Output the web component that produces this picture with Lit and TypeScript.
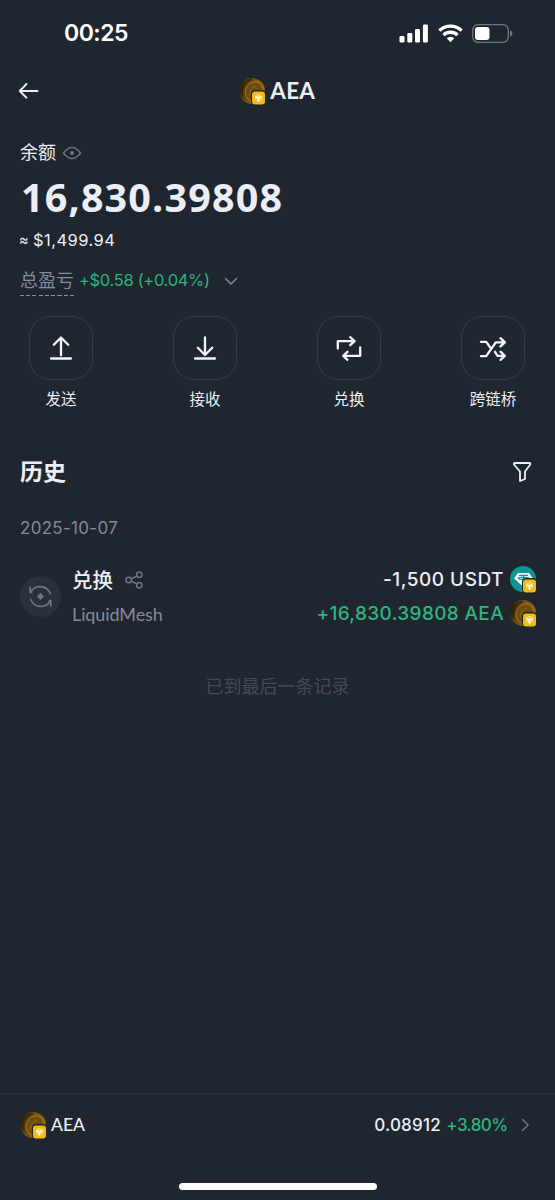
import { LitElement, html, svg, css } from "lit";
import { customElement, property } from "lit/decorators.js";

const goldCoin = svg`
  <defs>
    <linearGradient id="g" x1="0" y1="0.3" x2="1" y2="0.6">
      <stop offset="0" stop-color="#1c1508"></stop>
      <stop offset="0.25" stop-color="#5a400e"></stop>
      <stop offset="0.65" stop-color="#8a6010"></stop>
      <stop offset="1" stop-color="#9a6a12"></stop>
    </linearGradient>
  </defs>
  <circle cx="13" cy="13" r="13" fill="url(#g)"></circle>
  <path d="M3.500 18C1.500 10 5.500 3 13 1.200" fill="none" stroke="#33250b" stroke-width="1.600"></path>
  <ellipse cx="15" cy="13.500" rx="8.600" ry="9.800" transform="rotate(25 15 13.500)" fill="#6d4c10" stroke="#a8711a" stroke-width="1"></ellipse>
  <path d="M10.500 18C10.500 13 13 9 16.500 8.500" fill="none" stroke="#94671a" stroke-width="1"></path>
  <path d="M11.500 14.500l5.500-2-3.500 3.500z" fill="#77736a"></path>`;

const tether = svg`
  <circle cx="13" cy="13" r="13" fill="#0f9690"></circle>
  <path d="M8 7h11l4 5.500L13.500 21 4 12.500z" fill="#f4fbfa"></path>
  <path d="M9 9.300h9M13.500 9.300v7M8.500 12.300c0-1.600 10-1.600 10 0s-10 1.600-10 0z" fill="none" stroke="#0f9690" stroke-width="1.300"></path>`;

@customElement("token-logo")
class TokenLogo extends LitElement {
  @property() kind = "aea";
  static styles = css`
    :host { display: block; width: 27px; height: 27px; flex: none; }
    svg { display: block; }
  `;
  render() {
    return html`<svg width="27" height="27" viewBox="0 0 27 27">
      ${this.kind === "usdt" ? tether : goldCoin}
      <rect x="11.900" y="12.100" width="15.500" height="15.500" rx="4.200" fill="#1f252f"></rect>
      <rect x="13" y="13.400" width="13" height="13" rx="3.200" fill="#f0bb16"></rect>
      <path d="M19.500 15.800l3.500 2v4l-3.500 2.200-3.500-2.200v-4z" fill="#f8dc80"></path>
      <path d="M16.500 18.400l3 1.700 3-1.700M19.500 20v3.600" fill="none" stroke="#fffbe8" stroke-width="1.100"></path>
      <path d="M17.400 20.800v1.300M21.600 20.800v1.300M18.200 17.600l1.300.7 1.300-.7" fill="none" stroke="#eeb410" stroke-width=".8"></path>
    </svg>`;
  }
}

const icons: Record<string, unknown> = {
  send: svg`<path d="M16 24.300V7M8.800 13.700L16 6.500l7.200 7.200M6 27.500h20"></path>`,
  receive: svg`<path d="M16 6.500v17.300M8.800 16.800L16 24l7.200-7.200M6 27.500h20"></path>`,
  swap: svg`<path d="M4.800 17.500V10.200H21M17.200 6.200l4.400 4-4.400 4M27.200 16.500v8.300H10.800M14.500 20.800l-4.300 4 4.300 4"></path>`,
  bridge: svg`<path d="M4 10.800h5.200L14 17.500M4 25.200h5.200L18.800 11.300h8M18 20.800l2.500 4h6.300M23.500 7.200l4.400 4.100-4.400 4.100M23.500 20.700l4.400 4.100-4.400 4.100"></path>`,
};

const actions = [
  { icon: "send", label: "发送" },
  { icon: "receive", label: "接收" },
  { icon: "swap", label: "兑换" },
  { icon: "bridge", label: "跨链桥" },
];

@customElement("app-root")
class AppRoot extends LitElement {
  static styles = css`
    :host {
      display: flex; flex-direction: column; height: 1200px; width: 555px;
      box-sizing: border-box; background: #1f262f; color: #eceef6; overflow: hidden;
      font-family: Inter, "Noto Sans CJK SC", sans-serif;
    }
    svg { display: block; flex: none; }
    .row { display: flex; align-items: center; white-space: nowrap; }
    .status { height: 66px; padding: 0 42px 0 64px; justify-content: space-between; color: #fff; }
    .time { font: 600 23px Inter, sans-serif; letter-spacing: -0.5px; }
    .signals { gap: 9.500px; }
    .header { display: grid; grid-template-columns: 1fr auto 1fr; align-items: center; height: 50px; padding: 0 18px; }
    .name { font-family: Lato, sans-serif; font-weight: 700; }
    .header .row { gap: 4.500px; margin-left: -1px; }
    .header .name { font-size: 22.500px; letter-spacing: 0.2px; margin-top: -2px; }
    .summary { padding: 25px 20px 0; }
    .label { height: 24px; gap: 6px; font-size: 18px; line-height: 24px; }
    .amount { height: 51px; margin-top: 6px; padding-left: 1px; font: 700 39.500px "Open Sans", sans-serif; letter-spacing: 1.150px; }
    .fiat { height: 24px; margin-top: 6px; font-size: 16.500px; }
    .approx { font-size: 14.500px; width: 12.500px; margin-left: -1px; margin-right: 1.500px; margin-top: -1px; }
    .usd { letter-spacing: 0.450px; }
    .pnl { height: 29px; margin-top: 17px; font-size: 16.500px; color: #2eb580; }
    .pnl-label { color: #858b98; font-size: 18px; line-height: 24px; padding-bottom: 3px; margin-right: 5px; }
    .dash { display: block; height: 1px; margin-top: 2px; background: repeating-linear-gradient(90deg, #8a90a0 0 4px, transparent 4px 6.250px); }
    .gain { margin-top: -7px; letter-spacing: -0.320px; }
    .chev { margin: -5px 0 0 14px; }
    .actions { display: flex; justify-content: space-between; padding: 0 30px 0 29px; margin-top: 18px; }
    .action { display: flex; flex-direction: column; align-items: center; width: 64px; font-size: 15.500px; }
    .tile { display: grid; place-items: center; width: 64px; height: 64px; box-sizing: border-box; border: 1px solid #343b45; border-radius: 21px; }
    .caption { line-height: 22px; margin-top: 9px; }
    .history { height: 32px; margin-top: 44px; padding: 0 23px 0 20px; justify-content: space-between; }
    .history-title { font-size: 23px; font-weight: 700; margin-top: -2px; }
    .filter { margin-top: 1px; }
    .date { height: 24px; margin-top: 29px; padding-left: 20px; font-size: 17px; color: #858b98; letter-spacing: 0.300px; }
    .entry { display: flex; align-items: center; padding: 0 18px 0 20px; margin-top: 22px; height: 68px; }
    .badge { width: 41px; height: 41px; border-radius: 50%; background: #2a313d; display: grid; place-items: center; margin: 1px 11px 0 0; }
    .title { height: 34px; gap: 12px; font-size: 20.500px; font-weight: 500; }
    .share { margin-top: 2px; }
    .source { height: 34px; font: 400 18px Lato, sans-serif; letter-spacing: -0.1px; color: #858b98; padding-top: 1px; box-sizing: border-box; }
    .values { margin-left: auto; }
    .value { height: 34px; justify-content: flex-end; gap: 6px; font-size: 19px; font-weight: 500; letter-spacing: 0.350px; }
    .v1 { letter-spacing: 0.500px; }
    .green { color: #2eb580; }
    .end { text-align: center; margin-top: 43px; line-height: 28px; font-size: 18px; color: #434a57; }
    .footer { margin-top: auto; height: 107px; box-sizing: border-box; border-top: 1px solid #2d343e; display: flex; flex-direction: column; align-items: center; }
    .ticker { align-self: stretch; height: 62px; padding: 0 25px 0 20px; font-size: 17px; font-weight: 500; }
    .ticker .name { font-size: 17.500px; margin: -2px 0 0 4px; font-weight: 500; }
    .price { margin-left: auto; margin-right: 5.500px; letter-spacing: 0.200px; }
    .change { letter-spacing: -0.600px; }
    .more { margin-left: 13.500px; }
    .home { width: 198px; height: 7px; border-radius: 4px; background: #fff; margin-top: 27px; }
  `;

  render() {
    return html`
      <div class="row status">
        <span class="time">00:25</span>
        <div class="row signals">
          <svg width="29" height="19" viewBox="0 0 29 19" fill="#fff">
            <rect x="0.500" y="12" width="5" height="6.500" rx="1.300"></rect><rect x="8.300" y="9" width="5" height="9.500" rx="1.300"></rect>
            <rect x="16" y="5" width="5" height="13.500" rx="1.300"></rect><rect x="23.900" y="0.500" width="5" height="18" rx="1.300"></rect>
          </svg>
          <svg width="25" height="19" viewBox="0 0 25 19" fill="none" stroke="#fff" stroke-width="3.300">
            <path d="M1.400 6.700a15.700 15.700 0 0 1 22.200 0"></path><path d="M5.500 11.100a10 10 0 0 1 14 0"></path>
            <path d="M8.700 14.200a5.400 5.400 0 0 1 7.600 0l-3.800 4.100z" fill="#fff" stroke="none"></path>
          </svg>
          <svg width="41" height="19" viewBox="0 0 41 19">
            <rect x="0.700" y="0.700" width="35.600" height="17.600" rx="5.300" fill="none" stroke="#737880" stroke-width="1.300"></rect>
            <rect x="3" y="3" width="14.500" height="13" rx="3" fill="#fff"></rect>
            <path d="M38 6.500c3.200 1 3.200 5 0 6z" fill="#737880"></path>
          </svg>
        </div>
      </div>

      <div class="header">
        <svg width="22" height="18" viewBox="0 0 22 18" fill="none" stroke="#eceef6" stroke-width="1.900" stroke-linecap="round" stroke-linejoin="round"><path d="M2 9h17.500M8.500 2L1.700 9l6.800 6.700"></path></svg>
        <div class="row"><token-logo></token-logo><span class="name">AEA</span></div>
        <span></span>
      </div>

      <div class="summary">
        <div class="row label">余额
          <svg width="20" height="14" viewBox="0 0 20 14" fill="none" stroke="#6d7486" stroke-width="1.500" stroke-linejoin="round"><path d="M1.500 7Q10-4 18.500 7 10 18 1.500 7z"></path><circle cx="10" cy="7" r="2" fill="#6d7486" stroke="none"></circle></svg>
        </div>
        <div class="row amount">16,830.39808</div>
        <div class="row fiat"><span class="approx">≈</span><span class="usd">$1,499.94</span></div>
        <div class="row pnl">
          <span class="pnl-label">总盈亏<span class="dash"></span></span>
          <span class="gain">+$0.58 (+0.04%)</span>
          <svg class="chev" width="14" height="9" viewBox="0 0 14 9" fill="none" stroke="#858b98" stroke-width="1.500" stroke-linecap="round" stroke-linejoin="round"><path d="M1.500 1.500L7 7l5.500-5.500"></path></svg>
        </div>
      </div>

      <div class="actions">
        ${actions.map((a) => html`<div class="action">
          <div class="tile"><svg width="34" height="34" viewBox="-1 0 34 34" fill="none" stroke="#f4f5fa" stroke-width="2.300" stroke-linecap="round" stroke-linejoin="round">${icons[a.icon]}</svg></div>
          <span class="caption">${a.label}</span>
        </div>`)}
      </div>

      <div class="row history">
        <span class="history-title">历史</span>
        <svg class="filter" width="20" height="22" viewBox="0 0 20 22" fill="none" stroke="#eceef6" stroke-width="1.800" stroke-linejoin="round"><path d="M2.500 2h15q1 0 .8 1.500L13 10.500v7.500l-5 2v-9.500L2 3.500Q1.600 2 2.500 2z"></path></svg>
      </div>

      <div class="row date">2025-10-07</div>

      <div class="entry">
        <div class="badge">
          <svg width="25" height="25" viewBox="0 0 25 25" fill="none" stroke="#6f7684" stroke-width="1.700" stroke-linecap="round" stroke-linejoin="round">
            <path d="M2.200 3.200v5.300h1.500M3 7.800C6.500 1 18 0 22.400 9.500M22.800 21.800v-5.300h-1.500M22 17.200C18.500 24 7 25 2.600 15.500"></path>
            <path d="M12.500 10l2.500 2.500-2.500 2.500-2.500-2.500z" fill="#6f7684"></path>
          </svg>
        </div>
        <div class="texts">
          <div class="row title">兑换
            <svg class="share" width="18" height="18" viewBox="0 0 18 18" fill="none" stroke="#6f7684" stroke-width="1.500"><circle cx="3.700" cy="9" r="2.800"></circle><circle cx="14.300" cy="3.800" r="2.700"></circle><circle cx="14.300" cy="14.200" r="2.700"></circle><path d="M6.200 7.800l5.700-2.800M6.200 10.200l5.700 2.800"></path></svg>
          </div>
          <div class="row source">LiquidMesh</div>
        </div>
        <div class="values">
          <div class="row value"><span class="v1">-1,500 USDT</span><token-logo kind="usdt"></token-logo></div>
          <div class="row value green"><span class="v2">+16,830.39808 AEA</span><token-logo></token-logo></div>
        </div>
      </div>

      <div class="end">已到最后一条记录</div>

      <div class="footer">
        <div class="row ticker">
          <token-logo></token-logo><span class="name">AEA</span>
          <span class="price">0.08912</span><span class="green change">+3.80%</span>
          <svg class="more" width="9" height="14" viewBox="0 0 9 14" fill="none" stroke="#6f7684" stroke-width="1.500" stroke-linecap="round" stroke-linejoin="round"><path d="M1.500 1.500L7 7l-5.500 5.500"></path></svg>
        </div>
        <div class="home"></div>
      </div>
    `;
  }
}
